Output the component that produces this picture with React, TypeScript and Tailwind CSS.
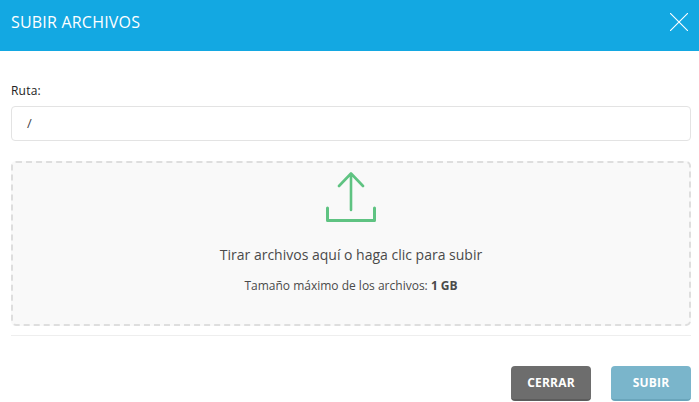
const font = "font-['Open_Sans',sans-serif]";

export default function App() {
  return (
    <div className={`w-[699px] h-[402px] overflow-hidden bg-white flex flex-col ${font}`}>
      <div className="h-[51px] shrink-0 bg-[#13a8e2] flex items-center justify-between pl-[11px] pr-[11px] pb-[8px]">
        <h1 className="text-[16px] leading-[22px] font-medium tracking-[0.2px] text-white">SUBIR ARCHIVOS</h1>
        <svg width="18" height="18" viewBox="0 0 18 18" className="text-white">
          <path d="M0 0 L18 18 M18 0 L0 18" stroke="currentColor" strokeWidth="1.1" fill="none" />
        </svg>
      </div>

      <div className="flex-1 flex flex-col pl-[11px] pr-[8px] pt-[31px]">
        <label className="text-[12px] leading-[17px] font-medium tracking-[0.2px] text-[#222]">Ruta:</label>
        <div className="mt-[7px] h-[35px] shrink-0 border border-[#e3e3e3] rounded-[4px] flex items-center pl-[15px] text-[13px] text-[#444]">
          /
        </div>

        <div className="mt-[20px] h-[165px] shrink-0 bg-[#f9f9f9] border-2 border-dashed border-[#dedede] rounded-[5px] flex flex-col items-center">
          <svg width="50" height="50" viewBox="0 0 50 50" className="mt-[9px] text-[#5fc382]" fill="none" stroke="currentColor" strokeLinecap="round" strokeLinejoin="round">
            <path d="M25 38 V1.5 M13 14 L25 1.5 L37 14" strokeWidth="2.6" />
            <path d="M1.5 36 V48.5 H48.5 V36" strokeWidth="3" />
          </svg>
          <p className="mt-[23px] text-[14px] leading-[20px] text-[#4a4a4a]">Tirar archivos aquí o haga clic para subir</p>
          <p className="mt-[12px] text-[12px] leading-[17px] text-[#4a4a4a]">
            Tamaño máximo de los archivos: <span className="font-bold">1 GB</span>
          </p>
        </div>

        <div className="mt-[9px] border-t border-[#eeeeee]" />

        <div className="mt-[30px] flex justify-end gap-[20px]">
          <button className="w-[80px] h-[35px] rounded-[4px] bg-[#6d6d6d] border-b-2 border-[#5c5c5c] text-white text-[12px] font-bold tracking-[0.2px]">CERRAR</button>
          <button className="w-[80px] h-[35px] rounded-[4px] bg-[#7ab5cb] border-b-2 border-[#6aa5bb] text-white text-[12px] font-bold tracking-[0.2px]">SUBIR</button>
        </div>
      </div>
    </div>
  );
}
